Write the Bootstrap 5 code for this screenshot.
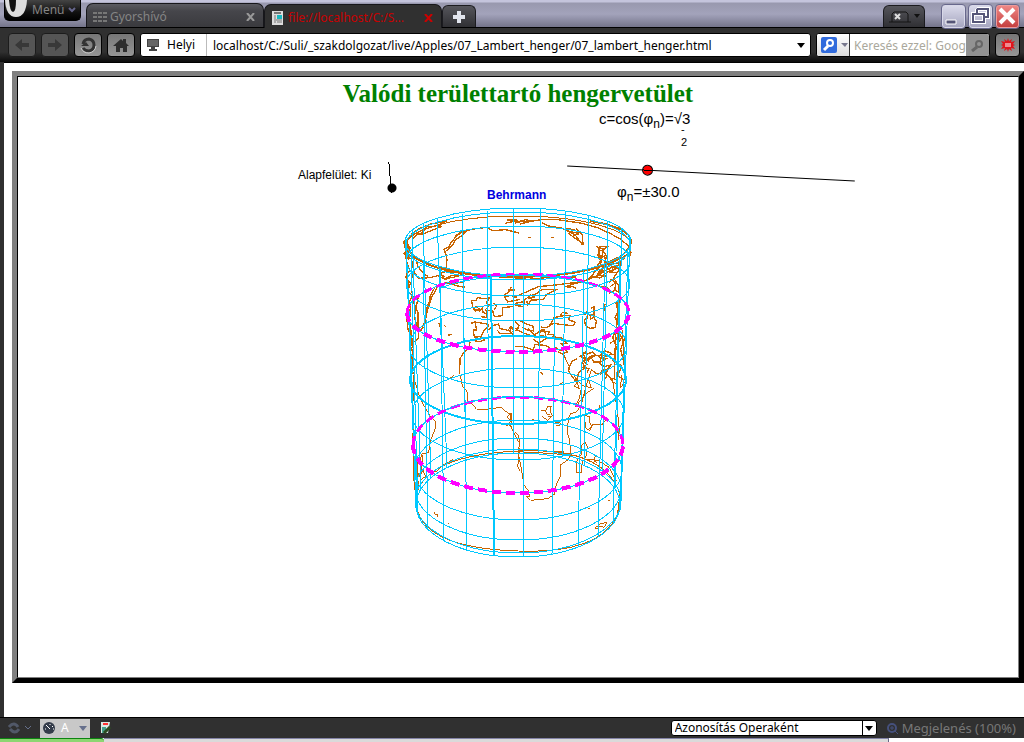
<!DOCTYPE html>
<html lang="hu">
<head>
<meta charset="utf-8">
<meta name="viewport" content="width=device-width, initial-scale=1">
<title>Valódi területtartó hengervetület</title>
<link href="https://cdn.jsdelivr.net/npm/bootstrap@5.3.0/dist/css/bootstrap.min.css" rel="stylesheet">
<style>
body{font:12px/16px "Noto Sans","Open Sans",sans-serif;background:#303030;color:#000}
button,input,select{font:inherit}
button{border:0;padding:0}
svg{display:block;flex:none}
.tabstrip{height:28px;background:linear-gradient(#c4c4dc 0,#c4c4dc 2px,#9898ae 3px,#a3a3bb 14px,#74748a);border-bottom:1px solid #000}
.menu-btn{width:77px;height:21px;margin-right:5px;background:linear-gradient(#444,#111 60%,#000);border:1px solid #000;border-top:0;border-radius:0 0 5px 5px;color:#858585;gap:3px;overflow:hidden}
.page-tab{width:178px;height:24px;padding:2px 8px 0 6px;gap:3px;background:linear-gradient(#5b5b62,#46464b 30%,#3a3a3e);border:1px solid #17171b;border-bottom:0;border-radius:7px 7px 0 0;color:#858585;align-self:flex-end}
.page-tab.current{background:#303030;color:#c80000;margin-bottom:-1px}
.page-tab a{color:inherit;text-decoration:none;white-space:nowrap;overflow:hidden}
.small-tab{width:34px;height:22px;align-self:flex-end;background:linear-gradient(#55555b,#303034);border:1px solid #1b1b1f;border-bottom:0;border-radius:6px 6px 0 0}
.trash-tab{width:42px;margin-right:16px;gap:3px}
.win-btns{gap:2px}
.win-btn{width:25px;height:25px;border:1px solid #68688c;border-radius:4px;background:linear-gradient(#dcdcec,#a4a4be);box-shadow:inset 0 0 0 1px #d8d8e8}
.win-btn.close-win{background:linear-gradient(#f08a88,#c33c3c);box-shadow:inset 0 0 0 1px #ec9b9b}
.addressbar{height:34px;padding:0 4px 0 8px;gap:5px;background:linear-gradient(#303030 24px,#0b0b0b 34px)}
.nav-btn{width:28px;height:24px;background:linear-gradient(#777,#969696);border:1px solid #000;border-radius:4px}
.turbo-btn{width:25px}
.nav-btn:disabled{background:#555;border-color:#1c1c1c}
.field-box{height:24px;background:#fff;border:1px solid #000;border-radius:3px;overflow:hidden}
.zone{gap:8px;padding:0 11px 0 6px;height:22px;border-right:1px solid #bbb}
.field-box input{border:0;outline:0;padding:0;min-width:0;height:22px;background:transparent}
.field-box .url{padding-left:6px}
.search-field{width:174px}
.search-field input::placeholder{color:#aaa89c;opacity:1}
.engine{width:33px;height:22px;gap:4px;background:linear-gradient(#fff,#ddd);border-right:1px solid #333}
.go{width:23px;height:22px;background:#929292}
.viewport-area{margin-left:4px;padding:8px 0 34px 8px;background:#fff;border-top:1px solid #000}
.frame-outer{border:5px solid;border-color:gray #000 #000 gray}
.frame-inner{border:1px solid;border-color:#000 gray gray #000;background:#fff}
h1{font:bold 25px/28px "Liberation Serif",serif;color:#008000;margin:3px 0 0}
.stage{position:relative;width:680px;height:482px;margin:0 auto;font:12px/16px "Liberation Sans",sans-serif}
.stage>*{position:absolute}
.formula{font:15px/20px "Liberation Sans",sans-serif;white-space:nowrap}
.formula sub{font-size:12px;bottom:-4px}
.coefficient{left:421px;top:1px}
.fraction{left:503px;top:17px;font-size:11px;line-height:8px}
.fraction span{display:block;line-height:16px;margin-top:1px}
.latitude-label{left:439px;top:74px}
.projection{left:309px;top:79px;color:#0000e0}
.surface{left:120px;top:59px}
.toggle{appearance:none;left:208px;top:54px;width:12px;height:31px;margin:0;background:radial-gradient(circle at 6px 26px,#000 4px,transparent 5px),linear-gradient(85deg,transparent 5px,#000 5px,#000 6px,transparent 6px)}
.latitude{appearance:none;left:389px;top:58px;width:288px;height:14px;margin:0;background:linear-gradient(#000,#000) 0 7px/100% 1px no-repeat;transform:rotate(3deg)}
.latitude::-webkit-slider-thumb{appearance:none;width:11px;height:11px;border:1px solid #000;border-radius:50%;background:linear-gradient(red 4px,#000 4px,#000 5px,red 5px)}
.globe{left:220px;top:95px}
.statusbar{height:21px;border-top:1px solid #000;padding:0 8px;color:#777}
.mode{width:50px;height:19px;background:#c8c8c8;color:#fff;gap:5px;padding:0 3px}
.identity{appearance:none;width:206px;height:16px;padding:0 3px;border:1px solid #000;border-radius:3px;color:#000;line-height:14px;background:linear-gradient(#000,#000) 190px 0/1px 16px no-repeat,#fff}
.identity-wrap{position:relative;margin-right:10px}
.identity-wrap svg{position:absolute;right:3px;top:6px;pointer-events:none}
.zoom-btn{color:inherit;font-size:13px}
.desk{height:4px;background:#fff}
.desk span{height:4px}
.desk .start{width:104px;background:#8cd672;border-top:1px solid #0c8410;border-radius:0 3px 0 0}
.desk .strip{width:785px;background:#dadada;border-top:1px solid #8484a8;border-right:1px solid #668}
</style>
</head>
<body class="d-flex flex-column min-vh-100">
<header>
<nav class="tabstrip d-flex ps-1 pe-1" aria-label="Lapok">
<button class="menu-btn d-flex align-items-center"><svg width="24" height="21"><path d="M0 0h22q-1 17-11 17Q1 17 0 0" fill="#ddd"/><path d="M4 0h7q0 12-3 12T4 0" fill="#111"/></svg><span>Menü</span><svg class="ms-auto me-1" width="8" height="6"><path d="M1 1l3 3 3-3" stroke="#66668c" fill="none" stroke-width="2"/></svg></button>
<div class="page-tab d-flex align-items-center"><svg width="14" height="12"><path d="M0 2h4m1 0h4m1 0h4M0 6h4m1 0h4m1 0h4M0 10h4m1 0h4m1 0h4" stroke="#777" stroke-width="2"/></svg><a href="#" class="flex-grow-1">Gyorshívó</a><button class="bg-transparent" aria-label="Bezárás"><svg width="9" height="8"><path d="M1 0l7 8M8 0L1 8" stroke="#999" stroke-width="2"/></svg></button></div>
<div class="page-tab current d-flex align-items-center"><svg width="14" height="14"><path d="M1 0h11v14H1z" fill="#ddd"/><path d="M3 2h7" stroke="#777" stroke-width="2"/><path d="M6 4h5v4H6z" fill="#18b8c0"/><path d="M3 5h2m-2 2h2m-2 2h8m-8 2h2m1 0h5" stroke="#777"/></svg><a href="#" class="flex-grow-1">file://localhost/C:/S...</a><button class="bg-transparent" aria-label="Bezárás"><svg width="9" height="8"><path d="M1 0l7 8M8 0L1 8" stroke="#c00" stroke-width="2"/></svg></button></div>
<button class="small-tab d-flex align-items-center justify-content-center me-auto" aria-label="Új lap"><svg width="12" height="12"><path d="M6 0v12M0 6h12" stroke="#e2e5ee" stroke-width="4"/></svg></button>
<button class="small-tab trash-tab d-flex align-items-center justify-content-center" aria-label="Bezárt lapok"><svg width="22" height="13"><path d="M0 12h22M3 12V4l2-2h12l2 2v8" fill="none" stroke="#151515"/><path d="M6 4l5 5m0-5L6 9" stroke="#ddd" stroke-width="2"/></svg><svg width="6" height="5"><path d="M0 0l3 4 3-4" fill="#111"/></svg></button>
<div class="win-btns d-flex pt-1 flex-shrink-0">
<button class="win-btn" aria-label="Kis méret"><svg width="23" height="23"><path d="M4 15h10v4H4z" fill="#555577" stroke="#fff"/></svg></button>
<button class="win-btn" aria-label="Előző méret"><svg width="23" height="23"><path d="M8 4h11v8h-4M8 4v4M4 9h11v8H4z" fill="none" stroke="#fff" stroke-width="4"/><path d="M8 4h11v8h-4M8 4v4M4 9h11v8H4z" fill="none" stroke="#555577" stroke-width="2"/></svg></button>
<button class="win-btn close-win" aria-label="Bezárás"><svg width="23" height="23"><path d="M4 4l14 14M18 4L4 18" stroke="#fff" stroke-width="4"/></svg></button>
</div>
</nav>
<form class="addressbar d-flex align-items-center">
<button type="button" class="nav-btn d-flex align-items-center justify-content-center" disabled aria-label="Vissza"><svg width="16" height="14"><path d="M1 7l7-6v4h7v4H8v4z" fill="#383838"/></svg></button>
<button type="button" class="nav-btn d-flex align-items-center justify-content-center" disabled aria-label="Előre"><svg width="16" height="14"><path d="M15 7L8 1v4H1v4h7v4z" fill="#383838"/></svg></button>
<button type="button" class="nav-btn d-flex align-items-center justify-content-center" aria-label="Frissítés"><svg width="18" height="18"><path d="M4 8q1-5 6-5 5 1 5 6t-5 6q-4 0-6-3" fill="none" stroke="#333" stroke-width="3"/><path d="M2 10h8L7 6z" fill="#333"/><path d="M2 12q2 5 8 5 6-1 7-7" fill="none" stroke="#ccc"/></svg></button>
<button type="button" class="nav-btn d-flex align-items-center justify-content-center" aria-label="Kezdőlap"><svg width="16" height="15"><path d="M0 8l8-7 2 2V1h3v4l3 3h-2v6h-4v-4H7v4H3V8z" fill="#2e2e2e"/></svg></button>
<div class="field-box d-flex align-items-center flex-grow-1">
<label for="url" class="zone d-flex align-items-center"><svg width="12" height="12"><path d="M0 0h12v8H0zM4 8h4v2h2v2H2v-2h2z" fill="#444"/><path d="M1 1h10v6H1z" fill="#666"/></svg>Helyi</label>
<input id="url" class="url flex-grow-1" value="localhost/C:/Suli/_szakdolgozat/live/Apples/07_Lambert_henger/07_lambert_henger.html">
<svg class="me-1" width="9" height="5"><path d="M0 0h8L4 5z"/></svg>
</div>
<div class="field-box search-field d-flex align-items-center flex-shrink-0">
<button type="button" class="engine d-flex align-items-center flex-shrink-0 ps-1" aria-label="Kereső"><svg width="16" height="16"><rect width="16" height="16" rx="2" fill="#316bdc"/><circle cx="9" cy="6" r="3" fill="none" stroke="#fff" stroke-width="2"/><path d="M7 9l-4 4" stroke="#fff" stroke-width="3"/></svg><svg width="7" height="4"><path d="M0 0h7L4 4z" fill="#77778c"/></svg></button>
<input class="flex-grow-1 ms-1 w-50" aria-label="Keresés" placeholder="Keresés ezzel: Google">
<button type="button" class="go d-flex align-items-center justify-content-center flex-shrink-0" aria-label="Keresés"><svg width="13" height="13"><circle cx="8" cy="5" r="3" fill="none" stroke="#666" stroke-width="2"/><path d="M6 8l-5 4" stroke="#666" stroke-width="3"/></svg></button>
</div>
<button type="button" class="nav-btn turbo-btn d-flex align-items-center justify-content-center" aria-label="Turbó"><svg width="14" height="14"><path d="M7 0l1 3 3-2-1 3 4-1-2 3 2 1-2 1 2 3-4-1 1 3-3-2-1 3-1-3-3 2 1-3-4 1 2-3-2-1 2-1-2-3 4 1-1-3 3 2z" fill="#df151d"/><path d="M4 6h6M4 8h6" stroke="#fff"/></svg></button>
</form>
</header>
<main class="viewport-area flex-grow-1 d-flex flex-column">
<div class="frame-outer flex-grow-1 d-flex flex-column">
<div class="frame-inner flex-grow-1">
<h1 class="text-center">Valódi területtartó hengervetület</h1>
<div class="stage">
<div class="formula coefficient">c=cos(φ<sub>n</sub>)=√3</div>
<div class="fraction">-<span>2</span></div>
<label class="surface" for="surface">Alapfelület: Ki</label>
<input class="toggle" id="surface" type="checkbox">
<input class="latitude" id="lat" type="range" min="0" max="90" step="0.1" value="24.5">
<label class="formula latitude-label" for="lat">φ<sub>n</sub>=±30.0</label>
<strong class="projection">Behrmann</strong>
<svg class="globe" width="240" height="360" viewBox="398 203 240 360" role="img" aria-label="Hengervetület földgömbhálózattal" fill="none" shape-rendering="crispEdges">
<g stroke="#c86400">
<ellipse cx="518" cy="246" rx="113" ry="30"/>
<path d="M405 240Q410 276 518 277Q620 275 631 243Q633 228 590 221" stroke-width="2"/>
<path d="M417 492Q430 455 518 451T620 495M417 508Q425 548 518 551T620 505"/>
<g transform="translate(395 200) scale(.33333)" stroke-width="4">
<path d="M32 120l3 20-4 28 8 30-5 25 8 30-3 40 7 24-2 45 6 50-4 45 8 64M38 120l12-18 22-16 35-14 48-9-32 15-28 2-15 12-27 12-16 16-8 19-3-15M42 115l18-14 17 0 14-14 32-10 18 2-28 11-30 12-18 1-14 16M49 175l8 40 14 20 33-2 28-7 18 3M64 180l4 18 15 20 16 12M52 222l4 20M150 158l-3-10 14-8 10-16 12-14 14-12 18-4-15 14-18 10-8 17-13 11-10 9 5 24-3 28M180 110l16-14 40-9 38-5 18 10 40-3 40 10M330 70l35-8 10 6M335 60h25l-12 8M130 230l17 5 25-2 20-6 20-7-38-3-20-4-18 8 15 18 16-12 20 0M150 248l20 4 18 6 20 4-4-14-26 1-17-3M120 262l-14 24-2 15-8 22-6 40-12 30-9-16 0-40-12-28-7-40M70 290l-12 60 13 45-1 20-14 12-8 25M128 260l-17 30-14 42-10 52M35 190l9 20-12 20 14 20-8 22 14 15-12 24M48 400l7 43-4 50M35 350l4 40 14 20"/>
<path d="M34 118l4 52M32 130l12 14-14 16 14 18" stroke-width="9"/>
<path d="M230 302h12l7-9 20 3 15-2-10 14 10 8-12 12 4 14-12-5-2-13-8 9-13-4-8-8zM235 325l9-5 9 7-12 7zM240 365l5 25h-10l2 17 18 11 10-24 13-12 3-9-41-7-12 4M238 410h20l10 10-12 5-14-2-2-12M281 390l15-14 15-4 4 14 24 5 9-12 8 12-9 9h-33l-7-10M258 350l16 2 5-20 14 0 5 18 24-3 0-24 36-4M295 310l10 8-8 12M350 260l-10 18-14 8 12 20 37-8M330 290l20-4 15 8M340 270l20 0M352 380l-8 14 18 16M225 426l-3 18-15 12-12 20-1 46M132 370l4 12m12-7l4 6M158 405l13-1"/>
<path d="M326 408l25-2 24 2"/>
</g>
<g transform="translate(515 200) scale(.33333)" stroke-width="4">
<path d="M0 70l20-8 15 4-20 6 32-8 30-5 50 0 70 10 50 14 40 18 30 17 26 22 5 18-5 15M0 65h18l14-6 20 5M80 68l20 10 40 6 40 20 22 30M150 84l28 6-16 10 10 9 18-7-4-14 16 16 2 27-12-8-20-14M155 92l30 7M40 112h8M108 112h10M245 138l10 14-7 14 9 16-12 18 10 10-10 20 15-10 6-20 9-32-10-14-14-4 6 28 12-12 3 24-20 30M252 140h25l-10 8-15-5M264 150l-8 50M240 205l24 8-18 12 30 4M280 195l30-6 15-12-20-3-30 14-26 14-20 28-16 12M0 236l42 2 60-6 80-1M150 260l60-18 30-12 40-23 32-13M0 290l20-8 50-22 60-6 78-10M155 262l18-2 10 4M225 230l30 4 25-20 36-12M287 190l8 20 8-10 12 10-12 8-22-2M0 316l26 4 2-20 16-12 18-6 20-14 40 2-26 13-12 16-34 1-12 14-3-12M40 295l20-3M45 285l14 5M0 310l30-6M270 198l20 18 16 2-10 16 16 24 0 20-13-10 4-18-14-12-7 10M230 250l20 8 25 3 16 16 24 14-12 18 6 24-9 19 11 26M275 315l-10 20 5-22-3 16M285 260l15-10M282 280l18-10M218 330l-6 12-6 0M218 335v18l-10 6 4 18 13 8 15-2 4-19-8-13-8 6-3-12 12 0 0-24-10 4M105 375l12-22 28-6 20 0-4 12 20 8-5 10-43-4-15-4-23 14-18-2M160 340l-18-2-7 8M0 365l12 12-5 12-8 3M14 362l18 9 22 8 2 14-18-3-17-9M0 385l20 12 30 10M40 385l18 20 18-12 28 1-6 10 16-1 2 9-22 4-10-9-20 4-8-8M75 400l4-12 10 2 5 25-22 15-17-12M0 440l22-1 32 11 6-16 30 2 22 12M110 410l28 3 16 16-15 2 18 25-12 4 8 20 10 20-2 14 14 20 6 9M118 440l17 12 17-5 5 11M128 455l16 8M160 505l12-22 14-7M186 540l4-20 20-18-8-15 14-9 26-12-8-10-18 6-14-4 0 20 14 15-12 8 18 6-6 10M214 455l-18 14 24 14 10-17 26 0 14-14 18 8-8 10-20-4-5 20-20 0M250 470l24 6-22 12 15 12 20-5-8 15-17-2-6 18M230 510l18 13 18-10 12 12-10 15M285 430l18-12 8-16-12-6-6 18 12 30-8 20-10-3M302 390l-4 150M312 380l-4 160M316 180l-6 220M335 400l-18 48 12 52 2 40M322 390l8 140M292 480l28 18-12 30 21 12M310 300l-5 80 15 34-16 22"/>
<path d="M76 515l8 10M205 460l8 20 12-10 12 14M282 500l-10 22 20 16"/>
</g>
<g transform="translate(395 375) scale(.33333)" stroke-width="3">
<path d="M55 0v65l-3 38 4 50-4 44 5 60-3 35 7 60 6 50M60 20l14 46 14 28 18 30 15 16-1 24-13 30-6 39-20 4-10 28M157 10l14-2 6-8M195 0l8 34 13 16 1 27 18 14 10 12h25l49-6 19 17 12 1-1 31-4-28-10 8 12 11-4 10 32 61M350 155l-10-6-8 4M374 220l-6 55 7 13M118 412l2 5 8 2-2 6M162 444v4M62 270l10 36 12-20 8 18-16 12M66 250l4 90M83 240l-3 48M100 290l25-1 18-18 30-17"/>
</g>
<g transform="translate(515 375) scale(.33333)" stroke-width="3">
<path d="M0 172l8 6 6 20-4 36 8 42 9 53 14 20 2 16-8-1 12 12 52-5 20-14 4-25 12-26 3-15-3-20 24-16 8-14-3-46-7-20 3-46 8-14 14-2 16-20 15-60 17-50M184 292l-1-30 15-22 3-30 10-8 6 12-3 27-12 22-4 31zM78 106h14l7-12 10 0-4 12 7 16-14 14-18-12M87 105l10 12 8 3M100 123l11 1M120 143h16v8h-13M56 134h-4M206 120l18 5 0 17 7 12-10 10-8-4 0-18M216 162l8 4 8-16 28 0 14-18 22 18 15 26M255 90l-5 16-10 4M114 230l30-1 6 11 16-5M0 230l70 3 110 8 34 12 34 3 33 20 24 43M241 244l-4 14 8 4M280 376h4M220 402h4M240 457l10-3 6-9 20-2-8 14-12-4-9 9-8-3M178 0l7 25-8 8 16 9-12-34 20 24 28 6-10-30M200 35l-7 34-12 28 30-40 27-18M136 27l7-5M286 14l18 14 4-12-13-6M292 10l16 105 5 50-4 30M320 0l-4 40 14-20"/>
<path d="M315 360l-8 60-15 24"/>
</g>
</g>
<g stroke="#00c8ff">
<ellipse cx="518" cy="242" rx="113" ry="34"/><ellipse cx="518" cy="246" rx="113" ry="34"/><ellipse cx="518" cy="261" rx="112" ry="35"/><ellipse cx="518" cy="284" rx="112" ry="37"/><ellipse cx="518" cy="313" rx="111" ry="39"/><ellipse cx="518" cy="346" rx="109" ry="42"/><ellipse cx="518" cy="380" rx="108" ry="44" stroke-width="2"/><ellipse cx="518" cy="414" rx="106" ry="46"/><ellipse cx="518" cy="445" rx="105" ry="48"/><ellipse cx="518" cy="470" rx="104" ry="50"/><ellipse cx="518" cy="489" rx="103" ry="51"/><ellipse cx="518" cy="501" rx="103" ry="52"/><ellipse cx="518" cy="505" rx="102" ry="52"/>
<path d="M541 209L538 454M566 211L562 458M589 216L584 466M608 221L602 476M622 229L615 489M630 238L621 502M513 208V453M487 209L489 455M462 213L466 460M437 218L447 467M423 224L431 478M412 230L421 489M406 240L417 500"/>
<path d="M463 272L467 551M440 266L444 541M423 260L428 530M411 253L418 515M406 246L416 508M523 276V557M555 274L552 554M584 270L578 547M605 264L598 537M620 257L613 525M628 249L620 510"/>
<path d="M491 274L494 556" stroke-width="2"/>
</g>
<g stroke="#f0f" stroke-dasharray="9 5">
<path d="M407 313A111 39 0 0 1 629 313M413 445A105 48 0 0 1 623 445" stroke-width="3"/>
<path d="M407 313A111 39 0 0 0 629 313M413 445A105 48 0 0 0 623 445" stroke-width="4"/>
</g>
<path d="M440 288A111 39 0 0 1 596 286M445 410A105 48 0 0 1 591 410" stroke="#00c8ff"/>
</svg>
</div>
</div>
</div>
</main>
<footer>
<div class="statusbar d-flex align-items-center">
<button class="bg-transparent d-flex align-items-center gap-1 me-2" aria-label="Szinkronizálás"><svg width="12" height="12"><path d="M1 5q5-6 9 0M11 7q-4 6-9 0" fill="none" stroke="#515868" stroke-width="3"/></svg><svg width="8" height="6"><path d="M1 1l3 3 3-3" stroke="#66708c" fill="none"/></svg></button>
<button class="mode d-flex align-items-center"><svg width="13" height="13"><circle cx="6" cy="6" r="6" fill="#343c4a"/><path d="M3 3l4 4M7 2v1M10 4l-1 1M2 7h1M10 7h1" stroke="#fff"/></svg><span>A</span><svg class="ms-auto" width="8" height="5"><path d="M0 0h8L4 5z" fill="#66708c"/></svg></button>
<svg class="ms-2" width="14" height="12"><path d="M3 0h9l-2 11H3z" fill="#dce8e4"/><path d="M5 2h5" stroke="#f33" stroke-width="2"/><path d="M4 5h4v6H4z" fill="#45a08c"/><path d="M6 11l6-6" stroke="#2c4b22" stroke-width="3"/></svg>
<div class="identity-wrap d-flex ms-auto"><select class="identity" aria-label="Azonosítás"><option>Azonosítás Operaként</option></select><svg width="9" height="5"><path d="M0 0h8L4 5z"/></svg></div>
<button class="zoom-btn bg-transparent d-flex align-items-center gap-1 text-nowrap"><svg width="11" height="11"><circle cx="5" cy="5" r="4" fill="none" stroke="#45507c" stroke-width="2"/><path d="M3 5h4M5 3v4M8 8l3 3" stroke="#45507c"/></svg>Megjelenés (100%)</button>
</div>
<div class="desk d-flex"><span class="start"></span><span class="strip"></span></div>
</footer>
<script src="https://cdn.jsdelivr.net/npm/bootstrap@5.3.0/dist/js/bootstrap.bundle.min.js"></script>
</body>
</html>
